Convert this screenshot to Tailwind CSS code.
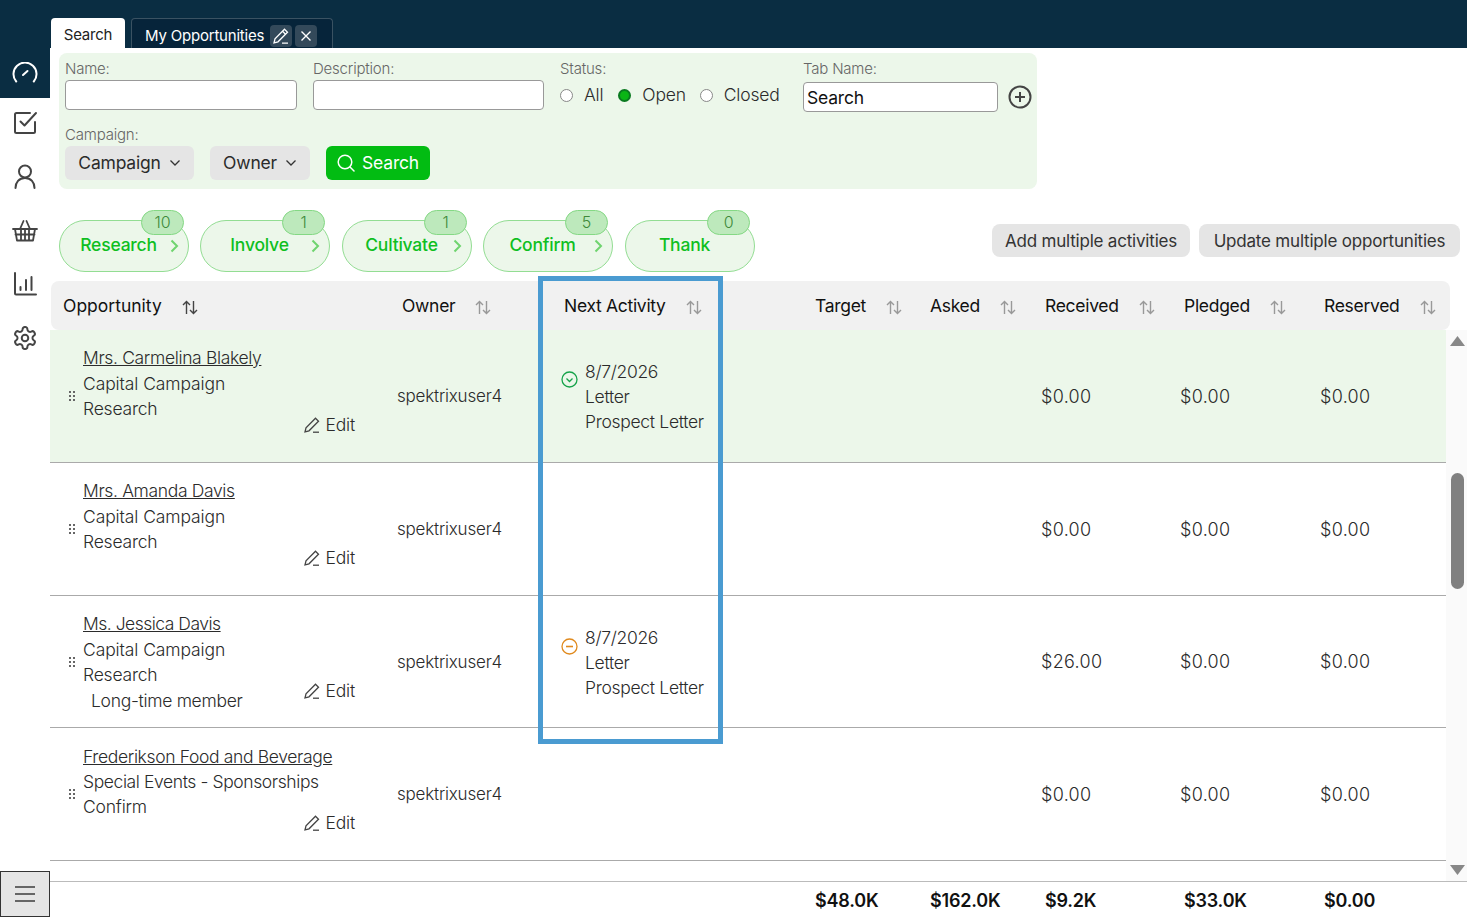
<!DOCTYPE html>
<html lang="en">
<head>
    <meta charset="UTF-8">
    <meta name="viewport" content="width=device-width, initial-scale=1.0">
    <title>Opportunities</title>
    <script src="https://cdn.jsdelivr.net/npm/@tailwindcss/browser@4"></script>
</head>
<body class="h-screen overflow-hidden bg-white text-[#2b2b2b] font-['Inter',sans-serif] font-light text-[17.5px] tracking-[-0.2px]">
    <!-- top bar + tabs -->
    <div class="h-12 bg-[#0a2d42] flex items-end pl-[51px] gap-[6px]">
        <div class="h-[30px] w-[74px] bg-white rounded-t flex items-center justify-center pt-[4px] text-[15px] font-normal text-[#222]">Search</div>
        <div class="h-[30px] w-[202px] bg-[#06243a] border border-b-0 border-[#3a5262] rounded-t flex items-center pl-[13px] pt-[5px] gap-[3px] text-[15px] font-normal text-white">
            <span class="mr-[3px]">My Opportunities</span>
            <span class="w-[22px] h-[22px] rounded bg-[#33495a] flex items-center justify-center">
                <svg width="18" height="18" viewBox="0 0 18 18" fill="none" stroke="#fff" stroke-width="1.3"><path d="M12.5 2.2l3 3L6 14.8l-4 1 1-4z"/><path d="M10.5 4.2l3 3M10 16.2h6"/></svg>
            </span>
            <span class="w-[22px] h-[22px] rounded bg-[#33495a] flex items-center justify-center">
                <svg width="12" height="12" viewBox="0 0 12 12" fill="none" stroke="#fff" stroke-width="1.4"><path d="M1.5 1.500l9 9M10.500 1.500l-9 9"/></svg>
            </span>
        </div>
    </div>

    <div class="flex h-[869px]">
        <!-- sidebar -->
        <div class="w-[50px] shrink-0 flex flex-col items-center">
            <div class="h-[50px] w-full bg-[#0a2d42] flex items-center justify-center">
                <svg width="26" height="22" viewBox="0 0 26 22" fill="none" stroke="#fff" stroke-width="2" stroke-linecap="round"><path d="M4.200 19.500A11.500 11.500 0 1 1 21.800 19.500"/><path d="M11 13l4.500-4"/></svg>
            </div>
            <div class="h-[48px] flex items-center justify-center">
                <svg width="25" height="25" viewBox="0 0 25 25" fill="none" stroke="#444" stroke-width="2" stroke-linecap="round" stroke-linejoin="round"><path d="M22 12v9.500a1.500 1.500 0 0 1-1.500 1.500h-17A1.500 1.500 0 0 1 2 21.500v-17A1.500 1.500 0 0 1 3.500 3H17"/><path d="M7.500 11.500l4 4L23 3"/></svg>
            </div>
            <div class="h-[60px] flex items-center justify-center">
                <svg width="22" height="25" viewBox="0 0 22 25" fill="none" stroke="#444" stroke-width="2" stroke-linecap="round"><circle cx="11" cy="7.500" r="6"/><path d="M1.500 24c0-5.500 3.500-10 9.500-10s9.500 4.500 9.500 10"/></svg>
            </div>
            <div class="h-[50px] flex items-center justify-center">
                <svg width="26" height="22" viewBox="0 0 26 22" fill="none" stroke="#444" stroke-width="1.800" stroke-linecap="round" stroke-linejoin="round"><path d="M1 9h24M3 9l2 11.500h16L23 9M8 9l3.500-8M18 9L14.500 1M9 9.500v11M13 9.500v11M17 9.500v11M3.500 14.500h19"/></svg>
            </div>
            <div class="h-[56px] flex items-center justify-center">
                <svg width="24" height="24" viewBox="0 0 24 24" fill="none" stroke="#444" stroke-width="2" stroke-linecap="round"><path d="M2 1v20.500a1 1 0 0 0 1 1h20"/><path d="M7.500 15v3M13 8v10M18.500 5v13"/></svg>
            </div>
            <div class="h-[52px] flex items-center justify-center">
                <svg width="24" height="24" viewBox="1 1 22 22" fill="none" stroke="#444" stroke-width="1.800" stroke-linejoin="round"><circle cx="12" cy="12" r="3"/><path d="M12.220 2h-.44a2 2 0 0 0-2 2v.18a2 2 0 0 1-1 1.730l-.43.25a2 2 0 0 1-2 0l-.15-.08a2 2 0 0 0-2.730.73l-.22.38a2 2 0 0 0 .73 2.730l.15.1a2 2 0 0 1 1 1.720v.51a2 2 0 0 1-1 1.740l-.15.09a2 2 0 0 0-.73 2.730l.22.38a2 2 0 0 0 2.730.73l.15-.08a2 2 0 0 1 2 0l.43.25a2 2 0 0 1 1 1.730V20a2 2 0 0 0 2 2h.44a2 2 0 0 0 2-2v-.18a2 2 0 0 1 1-1.730l.43-.25a2 2 0 0 1 2 0l.15.08a2 2 0 0 0 2.730-.73l.22-.39a2 2 0 0 0-.73-2.730l-.15-.08a2 2 0 0 1-1-1.740v-.5a2 2 0 0 1 1-1.740l.15-.09a2 2 0 0 0 .73-2.730l-.22-.38a2 2 0 0 0-2.730-.73l-.15.08a2 2 0 0 1-2 0l-.43-.25a2 2 0 0 1-1-1.730V4a2 2 0 0 0-2-2z"/></svg>
            </div>
            <div class="mt-auto w-full h-[46px] bg-[#e5e5e5] border border-[#333] flex items-center justify-center">
                <svg width="20" height="18" viewBox="0 0 20 18" stroke="#666" stroke-width="2"><path d="M0 2h20M0 9h20M0 16h20"/></svg>
            </div>
        </div>

        <!-- main -->
        <div class="flex-1 min-w-0 relative">
            <!-- filter panel -->
            <div class="ml-[9px] mt-[5px] w-[978px] h-[136px] bg-[#ecf7ea] rounded-lg pl-[6px] pt-[6px]">
                <div class="flex h-[66px]">
                    <div class="w-[248px]">
                        <div class="text-[15px] leading-[19px] pb-[2px] text-[#666]">Name:</div>
                        <input class="w-[232px] h-[30px] bg-white border border-[#999] rounded">
                    </div>
                    <div class="w-[247px]">
                        <div class="text-[15px] leading-[19px] pb-[2px] text-[#666]">Description:</div>
                        <input class="w-[231px] h-[30px] bg-white border border-[#999] rounded">
                    </div>
                    <div class="w-[243px]">
                        <div class="text-[15px] leading-[19px] pb-[2px] text-[#666]">Status:</div>
                        <div class="flex items-center h-[30px]">
                            <input type="radio" name="status" class="appearance-none w-[13px] h-[13px] rounded-full border border-[#888] bg-white">
                            <span class="ml-[11px] mr-[15px]">All</span>
                            <input type="radio" name="status" checked class="appearance-none w-[13px] h-[13px] rounded-full border-2 border-[#0a7a20] bg-[#0ab515]">
                            <span class="ml-[11px] mr-[14px]">Open</span>
                            <input type="radio" name="status" class="appearance-none w-[13px] h-[13px] rounded-full border border-[#888] bg-white">
                            <span class="ml-[11px]">Closed</span>
                        </div>
                    </div>
                    <div>
                        <div class="text-[15px] leading-[19px] pb-[2px] text-[#666]">Tab Name:</div>
                        <div class="flex items-center gap-[10px] mt-[2px]">
                            <input value="Search" class="w-[195px] h-[30px] bg-white border border-[#999] rounded px-[3px] text-[#111] font-normal">
                            <svg width="24" height="24" viewBox="0 0 24 24" fill="none" stroke="#444" stroke-width="2"><circle cx="12" cy="12" r="10.500"/><path d="M12 7v10M7 12h10"/></svg>
                        </div>
                    </div>
                </div>
                <div class="text-[15px] leading-5 text-[#666]">Campaign:</div>
                <div class="flex gap-4 mt-[1px]">
                    <button class="h-[34px] w-[129px] bg-[#e5e5e5] rounded-md flex items-center justify-center gap-2 font-normal">Campaign
                        <svg width="12" height="8" viewBox="0 0 12 8" fill="none" stroke="#333" stroke-width="1.300"><path d="M1.500 1.500L6 6l4.500-4.500"/></svg>
                    </button>
                    <button class="h-[34px] w-[100px] bg-[#e5e5e5] rounded-md flex items-center justify-center gap-2 font-normal">Owner
                        <svg width="12" height="8" viewBox="0 0 12 8" fill="none" stroke="#333" stroke-width="1.300"><path d="M1.500 1.500L6 6l4.500-4.500"/></svg>
                    </button>
                    <button class="h-[34px] w-[104px] bg-[#02bc12] text-white rounded-md flex items-center justify-center gap-[7px] font-normal">
                        <svg width="18" height="18" viewBox="0 0 18 18" fill="none" stroke="#fff" stroke-width="1.500" stroke-linecap="round"><circle cx="8" cy="8" r="6.800"/><path d="M13 13l4 4"/></svg>
                        Search
                    </button>
                </div>
            </div>

            <!-- stages and bulk buttons -->
            <div class="flex items-start h-[92px] pt-[21px] pl-[9px] pr-[7px]">
                <div class="relative w-[130px] h-[52px] mt-[10px] mr-[11px] pr-[11px] pb-[2px] bg-[#ecf7ea] border border-[#93dd93] rounded-full flex items-center justify-center text-[17.5px] font-medium text-[#0fbf1f]">
                    Research
                    <svg class="absolute right-[9px] top-[18px]" width="9" height="14" viewBox="0 0 9 14" fill="none" stroke="#6fd46f" stroke-width="2"><path d="M1.500 1.500L7 7l-5.500 5.500"/></svg>
                    <span class="absolute -top-[11px] right-[4px] w-[43px] h-[25px] pb-[1px] rounded-full bg-[#bde9bc] border border-[#84d884] flex items-center justify-center text-[16px] font-light text-[#3f8a3a]">10</span>
                </div>
                <div class="relative w-[130px] h-[52px] mt-[10px] mr-[12px] pr-[11px] pb-[2px] bg-[#ecf7ea] border border-[#93dd93] rounded-full flex items-center justify-center text-[17.5px] font-medium text-[#0fbf1f]">
                    Involve
                    <svg class="absolute right-[9px] top-[18px]" width="9" height="14" viewBox="0 0 9 14" fill="none" stroke="#6fd46f" stroke-width="2"><path d="M1.500 1.500L7 7l-5.500 5.500"/></svg>
                    <span class="absolute -top-[11px] right-[4px] w-[43px] h-[25px] pb-[1px] rounded-full bg-[#bde9bc] border border-[#84d884] flex items-center justify-center text-[16px] font-light text-[#3f8a3a]">1</span>
                </div>
                <div class="relative w-[130px] h-[52px] mt-[10px] mr-[11px] pr-[11px] pb-[2px] bg-[#ecf7ea] border border-[#93dd93] rounded-full flex items-center justify-center text-[17.5px] font-medium text-[#0fbf1f]">
                    Cultivate
                    <svg class="absolute right-[9px] top-[18px]" width="9" height="14" viewBox="0 0 9 14" fill="none" stroke="#6fd46f" stroke-width="2"><path d="M1.500 1.500L7 7l-5.500 5.500"/></svg>
                    <span class="absolute -top-[11px] right-[4px] w-[43px] h-[25px] pb-[1px] rounded-full bg-[#bde9bc] border border-[#84d884] flex items-center justify-center text-[16px] font-light text-[#3f8a3a]">1</span>
                </div>
                <div class="relative w-[130px] h-[52px] mt-[10px] mr-[12px] pr-[11px] pb-[2px] bg-[#ecf7ea] border border-[#93dd93] rounded-full flex items-center justify-center text-[17.5px] font-medium text-[#0fbf1f]">
                    Confirm
                    <svg class="absolute right-[9px] top-[18px]" width="9" height="14" viewBox="0 0 9 14" fill="none" stroke="#6fd46f" stroke-width="2"><path d="M1.500 1.500L7 7l-5.500 5.500"/></svg>
                    <span class="absolute -top-[11px] right-[4px] w-[43px] h-[25px] pb-[1px] rounded-full bg-[#bde9bc] border border-[#84d884] flex items-center justify-center text-[16px] font-light text-[#3f8a3a]">5</span>
                </div>
                <div class="relative w-[130px] h-[52px] mt-[10px] pr-[11px] pb-[2px] bg-[#ecf7ea] border border-[#93dd93] rounded-full flex items-center justify-center text-[17.5px] font-medium text-[#0fbf1f]">
                    Thank
                    <span class="absolute -top-[11px] right-[4px] w-[43px] h-[25px] pb-[1px] rounded-full bg-[#bde9bc] border border-[#84d884] flex items-center justify-center text-[16px] font-light text-[#3f8a3a]">0</span>
                </div>
                <div class="ml-auto flex gap-[9px] mt-[14px]">
                    <button class="h-[33px] w-[198px] pt-[2px] bg-[#e5e5e5] rounded-lg text-[17px] font-normal text-[#333]">Add multiple activities</button>
                    <button class="h-[33px] w-[261px] pt-[2px] bg-[#e5e5e5] rounded-lg text-[17px] font-normal text-[#333]">Update multiple opportunities</button>
                </div>
            </div>

            <!-- table header -->
            <div class="ml-[1px] w-[1399px] h-[49px] pt-[2px] bg-[#f1f1f1] rounded-lg grid grid-cols-[341px_162px_252px_115px_115px_139px_140px_135px] items-center font-normal tracking-[-0.3px] text-[#111]">
                <div class="pl-3 flex items-center gap-[20px] tracking-normal">Opportunity
                    <svg class="mt-[2px]" width="16" height="15" viewBox="0 0 16 15" fill="none" stroke="#444" stroke-width="1.400"><path d="M4.500 14V1.500M1 5l3.500-3.500L8 5M11.500 1v12.500M8 10l3.500 3.500L15 10"/></svg>
                </div>
                <div class="pl-[10px] flex items-center gap-[20px]">Owner
                    <svg class="mt-[2px]" width="16" height="15" viewBox="0 0 16 15" fill="none" stroke="#999" stroke-width="1.400"><path d="M4.500 14V1.500M1 5l3.500-3.500L8 5M11.500 1v12.500M8 10l3.500 3.500L15 10"/></svg>
                </div>
                <div class="pl-[10px] flex items-center gap-[20px]">Next Activity
                    <svg class="mt-[2px]" width="16" height="15" viewBox="0 0 16 15" fill="none" stroke="#999" stroke-width="1.400"><path d="M4.500 14V1.500M1 5l3.500-3.500L8 5M11.500 1v12.500M8 10l3.500 3.500L15 10"/></svg>
                </div>
                <div class="pl-[9px] flex items-center gap-[20px]">Target
                    <svg class="mt-[2px]" width="16" height="15" viewBox="0 0 16 15" fill="none" stroke="#999" stroke-width="1.400"><path d="M4.500 14V1.500M1 5l3.500-3.500L8 5M11.500 1v12.500M8 10l3.500 3.500L15 10"/></svg>
                </div>
                <div class="pl-[9px] flex items-center gap-[20px]">Asked
                    <svg class="mt-[2px]" width="16" height="15" viewBox="0 0 16 15" fill="none" stroke="#999" stroke-width="1.400"><path d="M4.500 14V1.500M1 5l3.500-3.500L8 5M11.500 1v12.500M8 10l3.500 3.500L15 10"/></svg>
                </div>
                <div class="pl-[9px] flex items-center gap-[20px]">Received
                    <svg class="mt-[2px]" width="16" height="15" viewBox="0 0 16 15" fill="none" stroke="#999" stroke-width="1.400"><path d="M4.500 14V1.500M1 5l3.500-3.500L8 5M11.500 1v12.500M8 10l3.500 3.500L15 10"/></svg>
                </div>
                <div class="pl-[9px] flex items-center gap-[20px]">Pledged
                    <svg class="mt-[2px]" width="16" height="15" viewBox="0 0 16 15" fill="none" stroke="#999" stroke-width="1.400"><path d="M4.500 14V1.500M1 5l3.500-3.500L8 5M11.500 1v12.500M8 10l3.500 3.500L15 10"/></svg>
                </div>
                <div class="pl-[9px] flex items-center gap-[20px]">Reserved
                    <svg class="mt-[2px]" width="16" height="15" viewBox="0 0 16 15" fill="none" stroke="#999" stroke-width="1.400"><path d="M4.500 14V1.500M1 5l3.500-3.500L8 5M11.500 1v12.500M8 10l3.500 3.500L15 10"/></svg>
                </div>
            </div>

            <!-- table body with scrollbar -->
            <div class="flex h-[552px] border-b border-[#bbb]">
                <div class="w-[1396px] shrink-0">
                    <div class="h-[133px] bg-[#ecf7ea] border-b border-[#aaa] grid grid-cols-[342px_162px_252px_115px_115px_139px_140px_130px] items-center">
                        <div class="flex h-full">
                            <div class="w-[33px] pl-[18px] flex items-center"><svg width="8" height="12" viewBox="0 0 8 12" fill="#666"><path d="M1 1h2v2H1zM5 1h2v2H5zM1 5h2v2H1zM5 5h2v2H5zM1 9h2v2H1zM5 9h2v2H5z"/></svg></div>
                            <div class="flex-1 min-w-0 whitespace-nowrap pt-[15px] leading-[25.500px]">
                                <div class="underline tracking-[-0.35px]">Mrs. Carmelina Blakely</div>
                                <div class="tracking-[-0.1px]">Capital Campaign</div>
                                <div>Research</div>
                            </div>
                            <div class="pt-[82px] pr-[37px] flex items-start gap-[5px] leading-[25px]">
                                <svg class="mt-[4px]" width="18" height="18" viewBox="0 0 18 18" fill="none" stroke="#444" stroke-width="1.300"><path d="M12.500 2.200l3 3L6 14.800l-4 1 1-4z"/><path d="M10 16.200h6"/></svg>Edit
                            </div>
                        </div>
                        <div class="pl-[5px] pt-[2px] text-[17px]">spektrixuser4</div>
                        <div class="flex items-start pl-[7px] gap-[7px] leading-[25.500px] tracking-[-0.3px]">
                            <svg class="mt-[12px]" width="17" height="17" viewBox="0 0 17 17" fill="none" stroke="#16a34a" stroke-width="1.300"><circle cx="8.500" cy="8.500" r="7.500"/><path d="M5.500 7.500l3 3 3-3"/></svg>
                            <div class="leading-[25px]"><div>8/7/2026</div><div>Letter</div><div>Prospect Letter</div></div>
                        </div>
                        <div></div><div></div>
                        <div class="pl-[5px] text-[18px] tracking-[0.3px]">$0.00</div><div class="pl-[5px] text-[18px] tracking-[0.3px]">$0.00</div><div class="pl-[5px] text-[18px] tracking-[0.3px]">$0.00</div>
                    </div>

                    <div class="h-[133px] border-b border-[#aaa] grid grid-cols-[342px_162px_252px_115px_115px_139px_140px_130px] items-center">
                        <div class="flex h-full">
                            <div class="w-[33px] pl-[18px] flex items-center"><svg width="8" height="12" viewBox="0 0 8 12" fill="#666"><path d="M1 1h2v2H1zM5 1h2v2H5zM1 5h2v2H1zM5 5h2v2H5zM1 9h2v2H1zM5 9h2v2H5z"/></svg></div>
                            <div class="flex-1 min-w-0 whitespace-nowrap pt-[15px] leading-[25.500px]">
                                <div class="underline tracking-[-0.35px]">Mrs. Amanda Davis</div>
                                <div class="tracking-[-0.1px]">Capital Campaign</div>
                                <div>Research</div>
                            </div>
                            <div class="pt-[82px] pr-[37px] flex items-start gap-[5px] leading-[25px]">
                                <svg class="mt-[4px]" width="18" height="18" viewBox="0 0 18 18" fill="none" stroke="#444" stroke-width="1.300"><path d="M12.500 2.200l3 3L6 14.800l-4 1 1-4z"/><path d="M10 16.200h6"/></svg>Edit
                            </div>
                        </div>
                        <div class="pl-[5px] pt-[2px] text-[17px]">spektrixuser4</div>
                        <div></div><div></div><div></div>
                        <div class="pl-[5px] text-[18px] tracking-[0.3px]">$0.00</div><div class="pl-[5px] text-[18px] tracking-[0.3px]">$0.00</div><div class="pl-[5px] text-[18px] tracking-[0.3px]">$0.00</div>
                    </div>

                    <div class="h-[132px] border-b border-[#aaa] grid grid-cols-[342px_162px_252px_115px_115px_139px_140px_130px] items-center">
                        <div class="flex h-full">
                            <div class="w-[33px] pl-[18px] flex items-center"><svg width="8" height="12" viewBox="0 0 8 12" fill="#666"><path d="M1 1h2v2H1zM5 1h2v2H5zM1 5h2v2H1zM5 5h2v2H5zM1 9h2v2H1zM5 9h2v2H5z"/></svg></div>
                            <div class="flex-1 min-w-0 whitespace-nowrap pt-[15px] leading-[25.500px]">
                                <div class="underline tracking-[-0.5px]">Ms. Jessica Davis</div>
                                <div class="tracking-[-0.1px]">Capital Campaign</div>
                                <div>Research</div>
                                <div class="pl-2 tracking-[-0.3px]">Long-time member</div>
                            </div>
                            <div class="pt-[82px] pr-[37px] flex items-start gap-[5px] leading-[25px]">
                                <svg class="mt-[4px]" width="18" height="18" viewBox="0 0 18 18" fill="none" stroke="#444" stroke-width="1.300"><path d="M12.500 2.200l3 3L6 14.800l-4 1 1-4z"/><path d="M10 16.200h6"/></svg>Edit
                            </div>
                        </div>
                        <div class="pl-[5px] pt-[2px] text-[17px]">spektrixuser4</div>
                        <div class="flex items-start pl-[7px] gap-[7px] leading-[25.500px] tracking-[-0.3px]">
                            <svg class="mt-[14px]" width="17" height="17" viewBox="0 0 17 17" fill="none" stroke="#e08a1e" stroke-width="1.300"><circle cx="8.500" cy="8.500" r="7.500"/><path d="M5 8.500h7" stroke-width="1.600"/></svg>
                            <div class="pt-[1px] leading-[25px]"><div>8/7/2026</div><div>Letter</div><div>Prospect Letter</div></div>
                        </div>
                        <div></div><div></div>
                        <div class="pl-[5px] text-[18px] tracking-[0.3px]">$26.00</div><div class="pl-[5px] text-[18px] tracking-[0.3px]">$0.00</div><div class="pl-[5px] text-[18px] tracking-[0.3px]">$0.00</div>
                    </div>

                    <div class="h-[133px] border-b border-[#aaa] grid grid-cols-[342px_162px_252px_115px_115px_139px_140px_130px] items-center">
                        <div class="flex h-full">
                            <div class="w-[33px] pl-[18px] flex items-center"><svg width="8" height="12" viewBox="0 0 8 12" fill="#666"><path d="M1 1h2v2H1zM5 1h2v2H5zM1 5h2v2H1zM5 5h2v2H5zM1 9h2v2H1zM5 9h2v2H5z"/></svg></div>
                            <div class="flex-1 min-w-0 whitespace-nowrap pt-[16px] leading-[25px]">
                                <div class="underline tracking-[-0.35px]">Frederikson Food and Beverage</div>
                                <div class="tracking-[-0.4px]">Special Events - Sponsorships</div>
                                <div>Confirm</div>
                            </div>
                            <div class="pt-[82px] pr-[37px] flex items-start gap-[5px] leading-[25px]">
                                <svg class="mt-[4px]" width="18" height="18" viewBox="0 0 18 18" fill="none" stroke="#444" stroke-width="1.300"><path d="M12.500 2.200l3 3L6 14.800l-4 1 1-4z"/><path d="M10 16.200h6"/></svg>Edit
                            </div>
                        </div>
                        <div class="pl-[5px] pt-[2px] text-[17px]">spektrixuser4</div>
                        <div></div><div></div><div></div>
                        <div class="pl-[5px] pt-[1px] text-[18px] tracking-[0.3px]">$0.00</div><div class="pl-[5px] pt-[1px] text-[18px] tracking-[0.3px]">$0.00</div><div class="pl-[5px] pt-[1px] text-[18px] tracking-[0.3px]">$0.00</div>
                    </div>
                </div>
                <!-- scrollbar -->
                <div class="w-[21px] bg-[#fafafa] flex flex-col items-center pt-[6px] pb-[6px] pl-[2px]">
                    <svg width="15" height="10" viewBox="0 0 15 10" fill="#888"><path d="M7.500 0L15 10H0z"/></svg>
                    <div class="w-[13px] h-[116px] mt-[127px] rounded-full bg-[#808080]"></div>
                    <svg class="mt-auto" width="15" height="10" viewBox="0 0 15 10" fill="#888"><path d="M7.500 10L15 0H0z"/></svg>
                </div>
            </div>

            <!-- totals -->
            <div class="h-[35px] pt-[2px] grid grid-cols-[342px_162px_252px_115px_115px_139px_140px_130px] items-center font-semibold text-[#111] text-[18px]">
                <div></div><div></div><div></div>
                <div class="pl-[9px]">$48.0K</div>
                <div class="pl-[9px]">$162.0K</div>
                <div class="pl-[9px]">$9.2K</div>
                <div class="pl-[9px]">$33.0K</div>
                <div class="pl-[9px]">$0.00</div>
            </div>

            <!-- callout box over the Next Activity column -->
            <div class="absolute left-[488px] top-[228px] w-[185px] h-[468px] border-[5px] border-[#4a9bd1]"></div>
        </div>
    </div>
</body>
</html>
